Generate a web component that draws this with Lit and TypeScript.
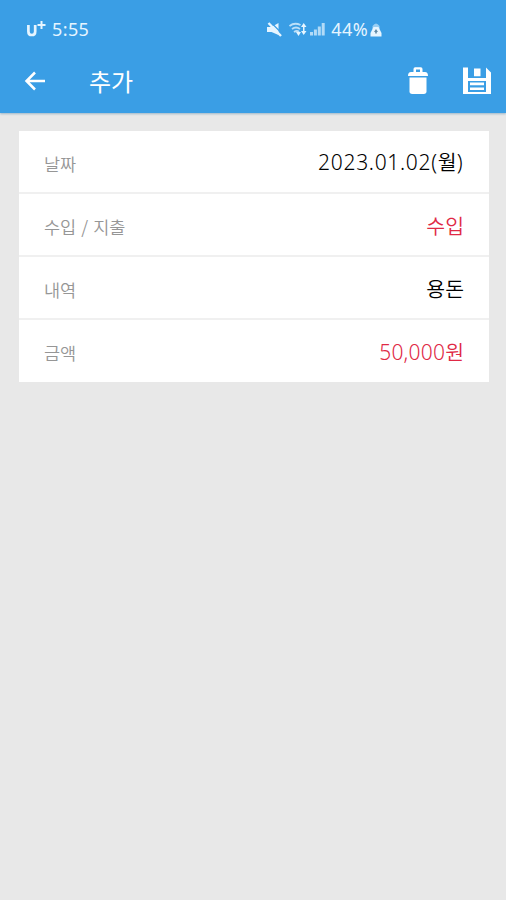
import { LitElement, html, css } from "lit";
import { customElement } from "lit/decorators.js";
import { classMap } from "lit/directives/class-map.js";

const rows = [
  { id: "date", label: "날짜", number: "2023.01.02(", word: "월", tail: ")", red: false },
  { id: "kind", label: "수입 / 지출", number: "", word: "수입", tail: "", red: true },
  { id: "memo", label: "내역", number: "", word: "용돈", tail: "", red: false },
  { id: "amount", label: "금액", number: "50,000", word: "원", tail: "", red: true },
];

@customElement("status-bar")
class StatusBar extends LitElement {
  static styles = css`
    :host { display: flex; align-items: center; height: 58px; padding: 0 124px 0 26px; box-sizing: border-box;
      color: #e6f5ff; font: 18px/24px "Noto Sans", sans-serif; }
    .time { margin-left: 6px; letter-spacing: 0.4px; }
    .icons { display: flex; align-items: center; margin-left: auto; }
    .percent { margin-left: 6px; letter-spacing: 0.4px; }
    .mute { margin-right: 6px; }
    .signal { margin-left: 3px; }
    .battery { margin-left: 2px; margin-top: 2px; }
    svg { display: block; fill: currentColor; }
  `;
  render() {
    return html`
      <svg width="20" height="18" viewBox="0 0 20 18">
        <path d="M2.4 5v6.4q0 3.6 3.4 3.6t3.4-3.6V5" fill="none" stroke="currentColor" stroke-width="2.7"/>
        <path d="M11.5 5h8M15.5 1v8" fill="none" stroke="currentColor" stroke-width="2"/>
      </svg>
      <span class="time">5:55</span>
      <div class="icons">
        <svg class="mute" width="16" height="16" viewBox="0 0 16 16">
          <path d="M0 6h4.5L11.500 2v12L4.500 11H0z"/>
          <path d="M3.500 1l12 12" fill="none" stroke="#3a9ee5" stroke-width="1.2"/>
          <path d="M1.500 2l12.500 13" fill="none" stroke="currentColor" stroke-width="2.4"/>
        </svg>
        <svg width="18" height="15" viewBox="0 0 18 15">
          <path d="M.5 4q5-4 11-1M3 7q4-3 8 0M5 10q3-2 5 0" fill="none" stroke="currentColor" stroke-width="1.8" opacity=".75"/>
          <path d="M7 10h5l-2.500 4zM12 5l2.700-4 2.800 4zM12 9h5.500l-2.800 4zM14 4h1.500v6H14z"/>
        </svg>
        <svg class="signal" width="15" height="14" viewBox="0 0 15 14">
          <path d="M0 10h3v3.500H0zM3.900 7.500h3v6h-3zM7.800 4.500h3v9h-3zM11.700 1h3v12.500h-3z" opacity=".7"/>
        </svg>
        <span class="percent">44%</span>
        <svg class="battery" width="12" height="16" viewBox="0 0 12 16">
          <path d="M2.500 4q3.500-5 7 0v3h-7z" opacity=".55"/>
          <path d="M3.500 5h5l3 6v3.500H.5V11z"/>
          <path d="M6 7l2 3H6.800v1.500H5.200V10H4z" fill="#5f8aa7"/>
        </svg>
      </div>
    `;
  }
}

@customElement("app-bar")
class AppBar extends LitElement {
  static styles = css`
    :host { display: flex; align-items: center; height: 55px; padding: 0 15px 9px 24px; box-sizing: border-box; color: #fff; }
    .title { margin: 0 auto 0 43px; font: 400 24px/36px "Noto Sans CJK KR", sans-serif; }
    .save { margin-left: 35px; }
    svg { display: block; }
  `;
  render() {
    return html`
      <svg width="22" height="20" viewBox="0 0 22 20">
        <path d="M21 10H3M11 1.500L2.500 10l8.500 8.500" fill="none" stroke="currentColor" stroke-width="2.500"/>
      </svg>
      <h1 class="title">추가</h1>
      <svg width="20" height="28" viewBox="0 0 20 28" fill="currentColor">
        <path d="M5.500 5V2q0-1.700 1.700-1.700h5.600q1.700 0 1.700 1.700v3H17q3 0 3 4H0q0-4 3-4zM8 2.500V5h4V2.500z" fill-rule="evenodd"/>
        <path d="M1.500 10.500h17v13.800q0 2.700-2.700 2.700H4.200q-2.700 0-2.700-2.700z"/>
      </svg>
      <svg class="save" width="28" height="28" viewBox="0 0 28 28" fill="currentColor">
        <path d="M0 .5h5V11h18V.5l5 5V27H0zM5 14v11h18V14z" fill-rule="evenodd"/>
        <path d="M11 1.500h6.500v7.800H11zM7 15.500h14v2.800H7zM7 20.500h14v2.600H7z"/>
      </svg>
    `;
  }
}

@customElement("app-root")
class AppRoot extends LitElement {
  static styles = css`
    :host { display: block; height: 900px; background: #e8e8e8; overflow: hidden; }
    .header { height: 113px; background: #3a9ee5; box-shadow: 0 1px 2px #9db6c8; }
    .card { margin: 18px 17px 0 19px; background: #fff; }
    .row { display: flex; align-items: center; justify-content: space-between; box-sizing: border-box; height: 63px;
      padding: 0 25px; border-bottom: 2px solid #f0f0f0; }
    .row:last-child { height: 62px; border-bottom: 0; }
    .label { padding-top: 4px; color: #969696; font: 350 17.5px/26px "Noto Sans CJK KR", sans-serif; word-spacing: 1.2px; }
    .value { display: flex; align-items: baseline; color: #000; font: 350 20.5px/30px "Noto Sans CJK KR", sans-serif; }
    .red { color: #e02945; }
    .number { font-family: "Noto Sans", sans-serif; font-size: 21px; font-weight: 350; letter-spacing: 0.2px; }
    .date { padding-right: 1.5px; }
    .date .number { letter-spacing: 0.7px; }
    .date .number:last-child { letter-spacing: 0; }
  `;
  render() {
    return html`
      <header class="header">
        <status-bar></status-bar>
        <app-bar></app-bar>
      </header>
      <main class="card">
        ${rows.map((r) => html`
          <div class="row">
            <span class="label">${r.label}</span>
            <span class=${classMap({ value: true, red: r.red, date: r.id === "date" })}>
              ${r.number ? html`<span class="number">${r.number}</span>` : null}<span>${r.word}</span>${r.tail ? html`<span class="number">${r.tail}</span>` : null}
            </span>
          </div>
        `)}
      </main>
    `;
  }
}
